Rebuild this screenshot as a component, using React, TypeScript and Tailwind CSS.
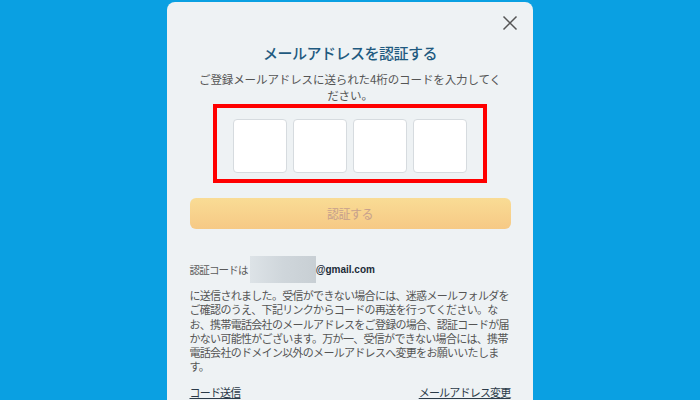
export default function App() {
  return (
    <div className="w-[700px] h-[400px] overflow-hidden bg-[#0aa0e2] flex justify-center pt-[2px] font-['Noto_Sans_CJK_JP',sans-serif]">
      <div className="relative w-[366px] h-[420px] bg-[#eef2f4] rounded-[8px] flex flex-col items-center">
        {/* close */}
        <button className="absolute right-[15px] top-[13px] w-[16px] h-[16px] text-[#555]">
          <svg viewBox="0 0 16 16" width="16" height="16" fill="none" stroke="currentColor" strokeWidth="1.5">
            <path d="M1.5 1.5l13 13M14.5 1.5l-13 13" />
          </svg>
        </button>

        <h1 className="mt-[41px] text-[15px] leading-[20px] font-medium text-[#1f5a80] tracking-[-0.5px]">
          メールアドレスを認証する
        </h1>
        <p className="mt-[8px] text-center text-[11.5px] leading-[16px] text-[#555] tracking-[-0.1px] whitespace-nowrap">
          ご登録メールアドレスに送られた4桁のコードを入力してく
          <br />
          ださい。
        </p>

        <div className="mt-[1px] w-[274px] h-[79px] border-[4px] border-[#ff0000] flex justify-center gap-[6px] pt-[11px]">
          <div className="w-[54px] h-[54px] bg-white border border-[#d6dbdf] rounded-[4px]" />
          <div className="w-[54px] h-[54px] bg-white border border-[#d6dbdf] rounded-[4px]" />
          <div className="w-[54px] h-[54px] bg-white border border-[#d6dbdf] rounded-[4px]" />
          <div className="w-[54px] h-[54px] bg-white border border-[#d6dbdf] rounded-[4px]" />
        </div>

        <button className="mt-[15px] w-[321px] h-[31px] rounded-[6px] bg-gradient-to-b from-[#f9dc95] to-[#f6c985] text-[12px] text-[#c6a08c] tracking-[-0.5px]">
          認証する
        </button>

        <div className="mt-[27px] w-[321px]">
          <div className="flex items-center h-[27px]">
            <span className="text-[10.5px] text-[#5a5a5a] tracking-[-0.8px]">認証コードは</span>
            <span className="ml-[2px] w-[66px] h-[27px] bg-gradient-to-r from-[#dde3e7] via-[#cfd6db] to-[#c8cfd4]" />
            <span className="text-[10px] font-bold text-[#1b2b38] font-['Liberation_Sans',sans-serif]">@gmail.com</span>
          </div>
          <p className="mt-[5px] text-[11px] leading-[14.3px] text-[#555] tracking-[-0.7px] whitespace-nowrap">
            に送信されました。受信ができない場合には、迷惑メールフォルダを
            <br />
            ご確認のうえ、下記リンクからコードの再送を行ってください。な
            <br />
            お、携帯電話会社のメールアドレスをご登録の場合、認証コードが届
            <br />
            かない可能性がございます。万が一、受信ができない場合には、携帯
            <br />
            電話会社のドメイン以外のメールアドレスへ変更をお願いいたしま
            <br />
            す。
          </p>
          <div className="mt-[10px] flex justify-between text-[11px] leading-[16px] text-[#2b3a48] tracking-[-0.8px]">
            <a className="underline">コード送信</a>
            <a className="underline">メールアドレス変更</a>
          </div>
        </div>
      </div>
    </div>
  );
}
